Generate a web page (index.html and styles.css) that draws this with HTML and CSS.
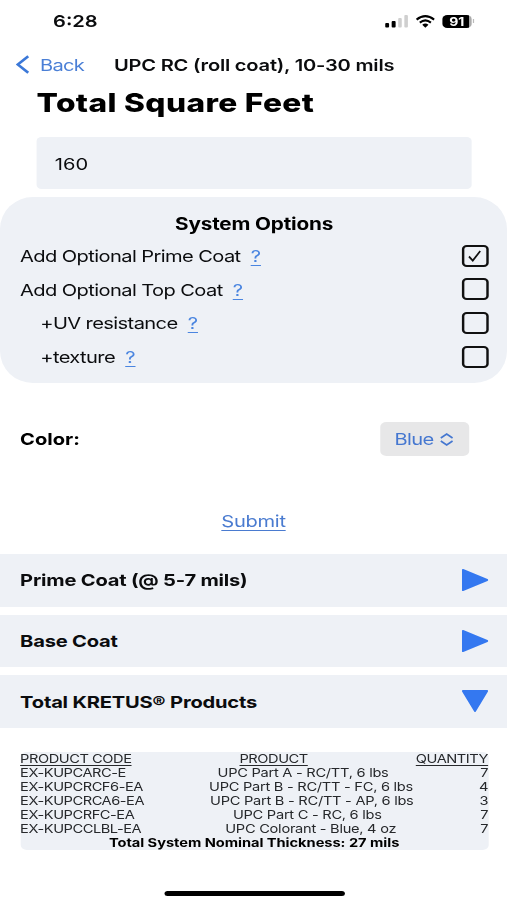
FILE: index.html
```html
<!DOCTYPE html>
<html lang="en">
<head>
<meta charset="utf-8">
<title>UPC RC (roll coat), 10-30 mils</title>
<link rel="stylesheet" href="styles.css">
</head>
<body>
<main class="phone">
  <header class="status">
    <span class="time">6:28</span>
    <div class="indicators">
      <svg class="signal" viewBox="0 0 24 13" preserveAspectRatio="none"><rect x="0" y="8" width="4" height="4.5" rx="1"/><rect x="6.6" y="6" width="4" height="6.5" rx="1"/><g fill="#cfcfcf"><rect x="13.2" y="3" width="3.6" height="9.5" rx="1"/><rect x="19.4" y="0" width="3.6" height="12.5" rx="1"/></g></svg>
      <svg class="wifi" viewBox="0 0 20 13" preserveAspectRatio="none"><g fill="none" stroke="#000" stroke-width="2.1"><path d="M1 4.6Q10-2.4 19 4.6"/><path d="M4.3 7.6Q10 3 15.7 7.6"/></g><path d="M6.8 9.7Q10 7.3 13.2 9.7L10 12.8z"/></svg>
      <span class="battery">91</span><span class="nub"></span>
    </div>
  </header>
  <nav class="nav">
    <svg class="chevron" viewBox="0 0 13 20" preserveAspectRatio="none"><path d="M11.7 1.3 1.8 10l9.9 8.7"/></svg>
    <span class="back">Back</span>
    <span class="nav-title">UPC RC (roll coat), 10-30 mils</span>
  </nav>
  <h1 class="title">Total Square Feet</h1>
  <div class="field">160</div>
  <section class="options">
    <h2 class="options-title">System Options</h2>
    <div class="option"><span class="label">Add Optional Prime Coat</span><a class="help">?</a><span class="box"><svg viewBox="0 0 14 12" preserveAspectRatio="none"><path d="M1 6.5 5 10.6 12.8 1"/></svg></span></div>
    <div class="option"><span class="label">Add Optional Top Coat</span><a class="help">?</a><span class="box"></span></div>
    <div class="option sub"><span class="label">+UV resistance</span><a class="help">?</a><span class="box"></span></div>
    <div class="option sub"><span class="label">+texture</span><a class="help">?</a><span class="box"></span></div>
  </section>
  <div class="color-row">
    <span class="color-label">Color:</span>
    <div class="picker"><span>Blue</span><svg viewBox="0 0 13 13" preserveAspectRatio="none"><path d="M.8 5 6.5 1 12.2 5M.8 8 6.5 12 12.2 8"/></svg></div>
  </div>
  <div class="submit-row"><a class="submit">Submit</a></div>
  <section class="sections">
    <div class="bar"><span>Prime Coat (@ 5-7 mils)</span><svg viewBox="0 0 26 22" preserveAspectRatio="none"><path d="M1 1 25 11 1 21z"/></svg></div>
    <div class="bar"><span>Base Coat</span><svg viewBox="0 0 26 22" preserveAspectRatio="none"><path d="M1 1 25 11 1 21z"/></svg></div>
    <div class="bar"><span>Total KRETUS® Products</span><svg viewBox="0 0 26 22" preserveAspectRatio="none"><path d="M1 1H25L13 21z"/></svg></div>
  </section>
  <section class="products">
    <div class="row head"><span>PRODUCT CODE</span><span>PRODUCT</span><span>QUANTITY</span></div>
    <div class="row"><span>EX-KUPCARC-E</span><span class="name">UPC Part A - RC/TT, 6 lbs</span><span>7</span></div>
    <div class="row"><span>EX-KUPCRCF6-EA</span><span class="name">UPC Part B - RC/TT - FC, 6 lbs</span><span>4</span></div>
    <div class="row"><span>EX-KUPCRCA6-EA</span><span class="name">UPC Part B - RC/TT - AP, 6 lbs</span><span>3</span></div>
    <div class="row"><span>EX-KUPCRFC-EA</span><span class="name">UPC Part C - RC, 6 lbs</span><span>7</span></div>
    <div class="row"><span>EX-KUPCCLBL-EA</span><span class="name">UPC Colorant - Blue, 4 oz</span><span>7</span></div>
    <div class="total">Total System Nominal Thickness: 27 mils</div>
  </section>
  <div class="home"></div>
</main>
</body>
</html>
```
FILE: styles.css
```css
* { box-sizing: border-box; }
html, body { margin: 0; width: 507px; height: 900px; overflow: hidden; background: #fff; }
/* 416px layout widened to the 507px viewport */
.phone {
  width: 416px; height: 900px; display: flex; flex-direction: column;
  transform: scaleX(1.21875); transform-origin: 0 0;
  font-family: Inter, "Liberation Sans", sans-serif; font-size: 16.5px; color: #0b0c0e;
  white-space: nowrap;
}
svg { display: block; flex: none; }
.status { height: 42px; padding: 0 27px 0 43.5px; display: flex; align-items: center; justify-content: space-between; }
.time { font-size: 16.5px; font-weight: 600; }
.indicators { display: flex; align-items: center; }
.signal { width: 19.5px; height: 13px; margin-right: 5.5px; }
.wifi { width: 16px; height: 13px; margin-right: 6px; }
.battery { width: 24.5px; height: 13px; border-radius: 4px; background: linear-gradient(90deg, #000 91%, #aaa 91%); color: #fff; font-size: 11.5px; font-weight: 700; line-height: 14px; text-align: center; }
.nub { width: 1px; height: 4px; margin-left: 1px; background: #bbb; }
.nav { height: 45px; padding-left: 13px; display: flex; align-items: center; }
.chevron { width: 11.3px; height: 19px; }
.chevron path { fill: none; stroke: #3b78d8; stroke-width: 2.5; }
.back { color: #4a7fd6; margin-left: 8.5px; width: 60.7px; letter-spacing: -0.6px; }
.nav-title { font-weight: 600; letter-spacing: -0.18px; }
.title { margin: 0; padding-left: 30px; height: 32px; line-height: 32px; font-size: 26px; font-weight: 800; letter-spacing: 0.29px; color: #000; }
.field { margin: 18px 0 0 30px; width: 357px; height: 52px; line-height: 54px; padding-left: 15px; background: #eef1f6; border-radius: 4px; }
.options { margin-top: 8px; height: 186px; padding: 9px 15.5px 0 16.5px; background: #eef1f6; border-radius: 27px / 32px; }
.options-title { margin: 0; height: 33px; line-height: 36px; font-size: 17px; font-weight: 700; letter-spacing: -0.15px; text-align: center; color: #000; }
.option { height: 33.6px; display: flex; align-items: center; }
.label { letter-spacing: -0.5px; padding-top: 0.5px; }
.sub { padding-left: 16.5px; }
.help { color: #4a85e0; text-decoration: underline; text-underline-offset: 3px; text-decoration-thickness: 1px; margin-left: 8.3px; padding-top: 0.5px; }
.box { margin-left: auto; width: 22px; height: 22px; border: 2px solid #111; border-radius: 4px; display: flex; align-items: center; justify-content: center; }
.box svg { width: 11px; height: 12px; }
.box path { fill: none; stroke: #111; stroke-width: 1.8; }
.color-row { margin-top: 39px; height: 34px; padding: 0 31px 0 16.5px; display: flex; align-items: center; justify-content: space-between; }
.color-label { font-weight: 700; color: #000; }
.picker { width: 73px; height: 34px; background: #e7e7e8; border-radius: 5px; color: #4577d0; display: flex; align-items: center; padding-left: 11.7px; gap: 5.5px; letter-spacing: -0.5px; }
.picker svg { width: 11px; height: 13px; }
.picker path { fill: none; stroke: #4577d0; stroke-width: 1.6; }
.submit-row { margin-top: 51px; height: 28px; line-height: 28px; text-align: center; }
.submit { color: #4a7bd0; letter-spacing: -0.25px; text-decoration: underline; text-underline-offset: 3px; text-decoration-thickness: 1px; }
.sections { margin-top: 19px; display: flex; flex-direction: column; gap: 8px; }
.bar { height: 52.6px; padding: 0 15.5px 0 16.5px; display: flex; align-items: center; justify-content: space-between; background: #eef1f6; font-weight: 650; }
.bar span { letter-spacing: -0.17px; padding-top: 0.4px; }
.bar svg { width: 21.5px; height: 22px; }
.bar path { fill: #3478f0; stroke: #3478f0; stroke-width: 2; stroke-linejoin: round; }
.products { margin: 24px 15.5px 0 16.5px; height: 98px; background: #eef1f6; border-radius: 5px; font-size: 12px; color: #26282b; }
.row { height: 14px; line-height: 14px; display: flex; justify-content: space-between; letter-spacing: -0.37px; }
.row .name { letter-spacing: -0.22px; }
.head span { text-decoration: underline; text-underline-offset: 1.5px; text-decoration-thickness: 1px; }
.total { height: 14px; line-height: 14px; text-align: center; font-weight: 700; letter-spacing: -0.03px; color: #000; }
.home { width: 148px; height: 5px; margin: 41px 0 0 134.5px; border-radius: 3px; background: #000; }
```
